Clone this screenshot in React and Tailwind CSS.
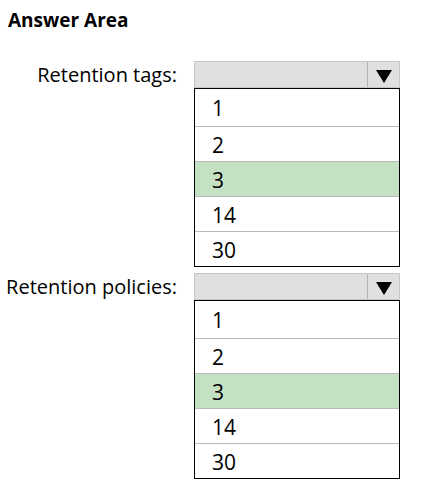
const OPTIONS = ['1', '2', '3', '14', '30'];
const ROW_HEIGHTS = ['h-[38px]', 'h-[35px]', 'h-[35px]', 'h-[35px]', 'h-[34px]'];

function Caret() {
  return (
    <svg width="16" height="13" viewBox="0 0 16 13" className="mt-[3px] block">
      <polygon points="0,0 16,0 8,13" fill="#000" />
    </svg>
  );
}

function DropdownAnswer({ label, selected }) {
  return (
    <>
      <div className="flex h-[27px] items-center justify-end text-[20px] leading-none text-black">
        {label}
      </div>
      <div className="flex flex-col">
        <div className="flex h-[27px] border border-[#c6c6c6] bg-[#e0e0e0]">
          <div className="flex-1" />
          <div className="flex w-[32px] items-center justify-center border-l border-[#b4b4b4]">
            <Caret />
          </div>
        </div>
        <ul className="border border-black bg-white">
          {OPTIONS.map((opt, i) => (
            <li
              key={opt}
              className={`flex items-center pl-[17px] pt-[2px] text-[21px] leading-none text-black ${ROW_HEIGHTS[i]} ${
                i < OPTIONS.length - 1 ? 'border-b border-[#b9b9b9]' : ''
              } ${opt === selected ? 'bg-[#c4e1c4]' : ''}`}
            >
              {opt}
            </li>
          ))}
        </ul>
      </div>
    </>
  );
}

export default function App() {
  return (
    <main className="h-[484px] w-[431px] bg-white font-['Open_Sans',sans-serif]">
      <h1 className="pl-[8px] pt-[8px] text-[19px] font-bold leading-[25px] text-black">Answer Area</h1>
      <div className="mt-[28px] grid grid-cols-[177px_206px] gap-x-[17px] gap-y-[6px]">
        <DropdownAnswer label="Retention tags:" selected="3" />
        <DropdownAnswer label="Retention policies:" selected="3" />
      </div>
    </main>
  );
}
